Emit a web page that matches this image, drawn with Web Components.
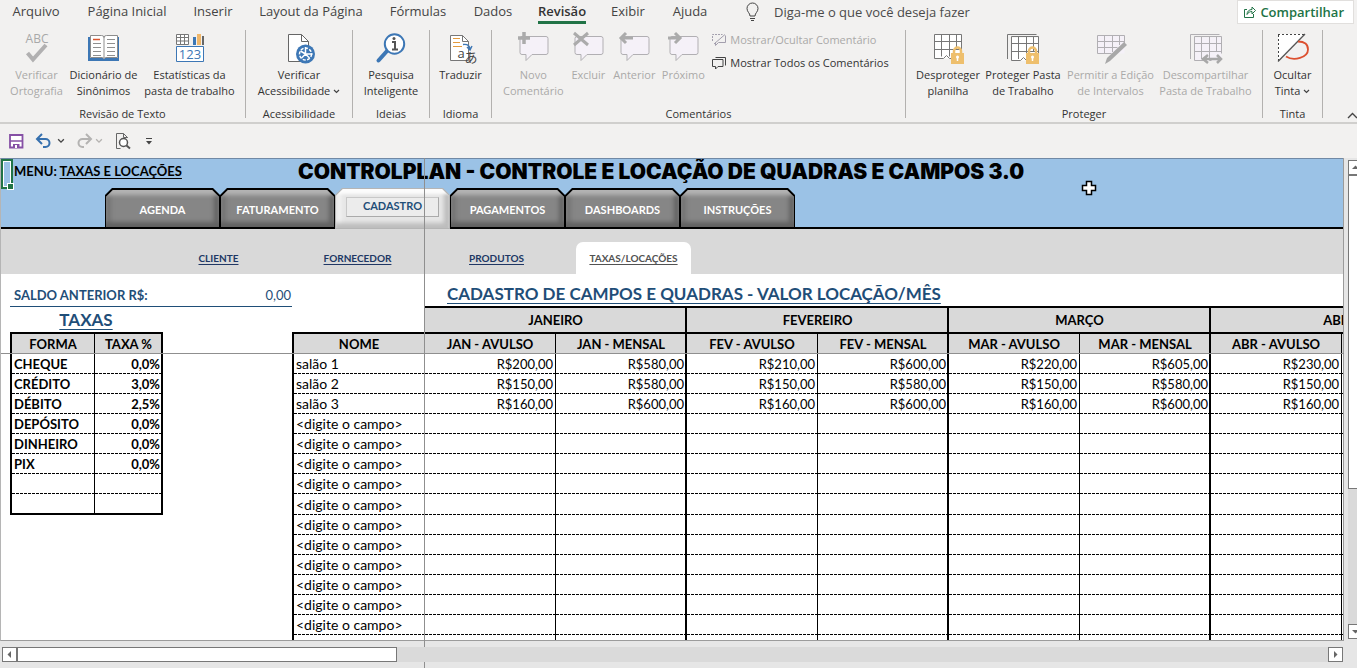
<!DOCTYPE html>
<html lang="pt-BR">
<head>
<meta charset="utf-8">
<title>Controlplan</title>
<style>
    html, body {
        margin: 0;
        height: 100%;
        overflow: hidden;
    }

    body {
        background: #f2f1f0;
        color: #333;
        font-family: "Open Sans", "Noto Sans", sans-serif;
        font-size: 11px;
    }
</style>
</head>
<body>
<office-window></office-window>

<template id="window-template">
    <style>
        :host {
            display: flex;
            flex-direction: column;
            height: 100vh;
        }

        .tabs {
            display: flex;
            align-items: center;
            height: 26px;
            padding-left: 6px;
        }

        .tell-me {
            display: flex;
            align-items: center;
            gap: 11px;
            padding: 0 0 3px 27px;
            border: 0;
            background: none;
            color: #4a4a4a;
            font: inherit;
            font-size: 13px;
            white-space: nowrap;
        }

        .share {
            display: flex;
            align-items: center;
            gap: 4px;
            height: 24px;
            margin: 0 3px 3px auto;
            padding: 0 9px 0 6px;
            border: 1px solid #e1dfdd;
            background: white;
            color: #217346;
            font: inherit;
            font-size: 13px;
            font-weight: 600;
        }

        .ribbon {
            display: flex;
            height: 96px;
            border-bottom: 2px solid #d0cfcd;
        }

        .collapse {
            align-self: flex-end;
            margin-left: auto;
            padding: 0;
            border: 0;
            background: none;
            color: #444;
            line-height: 0;
            overflow: hidden;
        }

        .comments {
            display: flex;
            flex-direction: column;
            gap: 7px;
            padding: 0 8px 0 4px;
        }

        .quick {
            display: flex;
            align-items: center;
            height: 34px;
            padding-left: 7px;
        }

        .quick button {
            padding: 0;
            border: 0;
            background: none;
            line-height: 0;
        }

        .quick .next {
            margin-left: 8px;
        }

        main {
            position: relative;
            display: flex;
            flex: 1;
            min-height: 0;
            background: #e6e6e6;
        }

        .pane {
            display: flex;
            flex: 1;
            flex-direction: column;
            min-width: 0;
        }

        control-sheet {
            flex: 1;
            min-height: 0;
        }
    </style>

    <nav class="tabs">
        <ribbon-tab width="60">Arquivo</ribbon-tab>
        <ribbon-tab width="122">Página Inicial</ribbon-tab>
        <ribbon-tab width="50">Inserir</ribbon-tab>
        <ribbon-tab width="146">Layout da Página</ribbon-tab>
        <ribbon-tab width="68">Fórmulas</ribbon-tab>
        <ribbon-tab width="82">Dados</ribbon-tab>
        <ribbon-tab width="56" active>Revisão</ribbon-tab>
        <ribbon-tab width="76">Exibir</ribbon-tab>
        <ribbon-tab width="48">Ajuda</ribbon-tab>
        <button class="tell-me"><app-icon name="bulb" width="22" height="22"></app-icon>Diga-me o que você deseja fazer</button>
        <button class="share"><app-icon name="share" width="12" height="12"></app-icon>Compartilhar</button>
    </nav>

    <section class="ribbon">
        <ribbon-group label="Revisão de Texto" width="246">
            <ribbon-button icon="spelling" width="64" disabled>Verificar<br>Ortografia</ribbon-button>
            <ribbon-button icon="thesaurus" width="70">Dicionário de<br>Sinônimos</ribbon-button>
            <ribbon-button icon="stats" width="102">Estatísticas da<br>pasta de trabalho</ribbon-button>
        </ribbon-group>
        <ribbon-group label="Acessibilidade" width="107">
            <ribbon-button icon="access" width="96">Verificar<br>Acessibilidade <app-icon name="down" width="7" height="7"></app-icon></ribbon-button>
        </ribbon-group>
        <ribbon-group label="Ideias" width="77">
            <ribbon-button icon="lookup" width="66">Pesquisa<br>Inteligente</ribbon-button>
        </ribbon-group>
        <ribbon-group label="Idioma" width="62">
            <ribbon-button icon="translate" width="50">Traduzir</ribbon-button>
        </ribbon-group>
        <ribbon-group label="Comentários" width="414">
            <ribbon-button icon="note-new" width="66" disabled>Novo<br>Comentário</ribbon-button>
            <ribbon-button icon="note-delete" width="44" disabled>Excluir</ribbon-button>
            <ribbon-button icon="note-prev" width="48" disabled>Anterior</ribbon-button>
            <ribbon-button icon="note-next" width="50" disabled>Próximo</ribbon-button>
            <div class="comments">
                <ribbon-line icon="note-toggle" disabled>Mostrar/Ocultar Comentário</ribbon-line>
                <ribbon-line icon="note-all">Mostrar Todos os Comentários</ribbon-line>
            </div>
        </ribbon-group>
        <ribbon-group label="Proteger" width="357">
            <ribbon-button icon="sheet-lock" width="68">Desproteger<br>planilha</ribbon-button>
            <ribbon-button icon="book-lock" width="82">Proteger Pasta<br>de Trabalho</ribbon-button>
            <ribbon-button icon="sheet-edit" width="93" disabled>Permitir a Edição<br>de Intervalos</ribbon-button>
            <ribbon-button icon="book-share" width="97" disabled>Descompartilhar<br>Pasta de Trabalho</ribbon-button>
        </ribbon-group>
        <ribbon-group label="Tinta" width="60">
            <ribbon-button icon="ink" width="50">Ocultar<br>Tinta <app-icon name="down" width="7" height="7"></app-icon></ribbon-button>
        </ribbon-group>
        <button class="collapse" aria-label="Recolher"><app-icon name="up" width="10" height="16"></app-icon></button>
    </section>

    <div class="quick">
        <button aria-label="Salvar"><app-icon name="save" width="18" height="18"></app-icon></button>
        <button class="next" aria-label="Desfazer"><app-icon name="undo" width="22" height="18"></app-icon></button>
        <button aria-label="Lista desfazer"><app-icon name="down" width="12" height="8"></app-icon></button>
        <button class="next" aria-label="Refazer"><app-icon name="redo" width="18" height="18"></app-icon></button>
        <button aria-label="Lista refazer"><app-icon name="down-off" width="12" height="8"></app-icon></button>
        <button class="next" aria-label="Visualizar"><app-icon name="preview" width="18" height="18"></app-icon></button>
        <button class="next" aria-label="Personalizar"><app-icon name="more" width="20" height="10"></app-icon></button>
    </div>

    <main>
        <div class="pane">
            <control-sheet></control-sheet>
            <scroll-bar></scroll-bar>
        </div>
        <scroll-bar vertical></scroll-bar>
    </main>
</template>

<template id="tab-template">
    <style>
        :host {
            display: flex;
            justify-content: center;
            height: 100%;
        }

        button {
            height: 24px;
            padding: 0;
            border: 0;
            border-bottom: 3px solid transparent;
            background: none;
            color: #444;
            font: inherit;
            font-size: 13px;
            white-space: nowrap;
        }

        :host([active]) button {
            border-color: #217346;
            color: #333;
            font-weight: 600;
        }
    </style>
    <button><slot></slot></button>
</template>

<template id="group-template">
    <style>
        :host {
            display: flex;
            flex: none;
            box-sizing: border-box;
            margin: 4px 0;
            border-right: 1px solid #b3b1af;
            flex-direction: column;
            justify-content: space-between;
        }

        .items {
            display: flex;
            justify-content: center;
            align-items: flex-start;
            padding-top: 2px;
        }

        .label {
            line-height: 9px;
            text-align: center;
        }
    </style>
    <div class="items"><slot></slot></div>
    <div class="label"></div>
</template>

<template id="button-template">
    <style>
        :host {
            display: block;
            flex: none;
        }

        button {
            display: flex;
            flex-direction: column;
            align-items: center;
            width: 100%;
            gap: 3px;
            padding: 0;
            border: 0;
            background: none;
            color: inherit;
            font: inherit;
            line-height: 16px;
            white-space: nowrap;
        }

        button:disabled {
            color: #aaa9a8;
        }
    </style>
    <button><app-icon width="32" height="32"></app-icon><span><slot></slot></span></button>
</template>

<template id="line-template">
    <style>
        :host {
            display: block;
        }

        button {
            display: flex;
            align-items: center;
            gap: 4px;
            padding: 0;
            border: 0;
            background: none;
            color: inherit;
            font: inherit;
            line-height: 16px;
            white-space: nowrap;
        }

        button:disabled {
            color: #aaa9a8;
        }
    </style>
    <button><app-icon width="14" height="14"></app-icon><slot></slot></button>
</template>

<template id="scroll-template">
    <style>
        :host {
            display: flex;
            flex: none;
            box-sizing: border-box;
            height: 27px;
            padding: 6px 0 6px 2px;
            background: #e6e6e6;
        }

        :host([vertical]) {
            flex-direction: column;
            width: 14px;
            height: auto;
            margin-bottom: 27px;
            padding: 2px 0 2px 4px;
            overflow: hidden;
            border-left: 1px solid #9b9b9b;
        }

        button {
            flex: none;
            box-sizing: border-box;
            width: 15px;
            height: 15px;
            padding: 0;
            border: 1px solid #777;
            background: white;
            line-height: 0;
        }

        .track {
            position: relative;
            z-index: 2;
            flex: 1;
            display: flex;
            background: #dadada;
        }

        .thumb {
            box-sizing: border-box;
            width: 29%;
            border: 1px solid #777;
            background: white;
        }

        :host([vertical]) .track {
            flex-direction: column;
            width: 15px;
        }

        :host([vertical]) .thumb {
            width: auto;
            height: 70%;
        }
    </style>
    <button aria-label="Voltar"><app-icon class="back" width="13" height="13"></app-icon></button>
    <div class="track"><div class="thumb"></div></div>
    <button aria-label="Avançar"><app-icon class="forward" width="13" height="13"></app-icon></button>
</template>

<template id="sheet-template">
    <style>
        :host {
            display: flex;
            flex-direction: column;
            box-sizing: border-box;
            overflow: hidden;
            border-top: 1px solid #7189a5;
            border-left: 1px solid #b5b5b5;
            border-bottom: 1px solid #9b9b9b;
            background: white;
            color: black;
            font-family: Lato, sans-serif;
            font-size: 13px;
        }

        .banner {
            display: flex;
            flex: none;
            flex-direction: column;
            justify-content: space-between;
            height: 68px;
            border-bottom: 2px solid black;
            background: #9bc2e6;
        }

        .heading {
            display: grid;
            grid-template-columns: 284px 1fr;
            line-height: 24px;
            padding-left: 13px;
            white-space: nowrap;
        }

        .menu {
            font-weight: 700;
        }

        .menu a {
            color: inherit;
            text-underline-offset: 2px;
        }

        h1 {
            margin: 0;
            font-family: Inter, "Liberation Sans", sans-serif;
            font-size: 21px;
            font-weight: 900;
            line-height: 26px;
        }

        .nav {
            display: flex;
            margin: 0 0 -2px 104px;
        }

        .subnav {
            display: flex;
            flex: none;
            align-items: flex-end;
            height: 45px;
            padding-left: 148px;
            background: #d9d9d9;
        }

        .subnav a {
            box-sizing: border-box;
            width: 139px;
            color: #203764;
            font-size: 10px;
            font-weight: 700;
            line-height: 32px;
            text-align: center;
            text-underline-offset: 2px;
        }

        .subnav a.active {
            width: 115px;
            margin-left: 10px;
            border-radius: 7px 7px 0 0;
            background: white;
            color: #525252;
        }

        .content {
            display: flex;
            flex: 1;
            min-height: 0;
        }

        .side {
            flex: none;
            width: 282px;
            padding-left: 9px;
            color: #1f4e78;
        }

        .balance {
            display: flex;
            justify-content: space-between;
            box-sizing: border-box;
            height: 33px;
            padding: 11px 1px 0 4px;
            border-bottom: 1px solid #1f4e78;
            line-height: 20px;
        }

        h2 {
            margin: 0;
            color: #1f4e78;
            font-size: 17px;
            font-weight: 700;
            line-height: 25px;
            text-decoration: underline;
            text-decoration-thickness: 1px;
            text-underline-offset: 3px;
            white-space: nowrap;
        }

        .side h2 {
            width: 152px;
            text-align: center;
        }

        .prices {
            flex: none;
        }

        .prices h2 {
            padding: 8px 0 0 155px;
            line-height: 24px;
        }

        /* Frozen pane edges */
        .freeze-row, .freeze-column {
            position: absolute;
            z-index: 1;
            top: 0;
            left: 424px;
            width: 1px;
            height: 100%;
            background: #8f8f8f;
        }

        .freeze-row {
            top: 195px;
            left: 1px;
            width: calc(100% - 14px);
            height: 1px;
        }

        .selection {
            position: absolute;
            top: 1px;
            left: 1px;
            box-sizing: border-box;
            width: 12px;
            height: 30px;
            border: 2px solid #217346;
            box-shadow: inset 0 0 0 1px white;
        }

        .selection::after {
            content: "";
            position: absolute;
            right: -3px;
            bottom: -3px;
            width: 5px;
            height: 5px;
            border: 1px solid white;
            background: #217346;
        }

        .cursor {
            position: absolute;
            top: 22px;
            left: 1081px;
        }
    </style>

    <div class="banner">
        <div class="heading">
            <div class="menu">MENU: <a href="#menu">TAXAS E LOCAÇÕES</a></div>
            <h1>CONTROLPLAN - CONTROLE E LOCAÇÃO DE QUADRAS E CAMPOS 3.0</h1>
        </div>
        <nav class="nav">
            <sheet-button>AGENDA</sheet-button>
            <sheet-button>FATURAMENTO</sheet-button>
            <sheet-button active>CADASTRO</sheet-button>
            <sheet-button>PAGAMENTOS</sheet-button>
            <sheet-button>DASHBOARDS</sheet-button>
            <sheet-button>INSTRUÇÕES</sheet-button>
        </nav>
    </div>

    <nav class="subnav">
        <a href="#cliente">CLIENTE</a>
        <a href="#fornecedor">FORNECEDOR</a>
        <a href="#produtos">PRODUTOS</a>
        <a href="#taxas" class="active">TAXAS/LOCAÇÕES</a>
    </nav>

    <div class="content">
        <div class="side">
            <div class="balance"><b>SALDO ANTERIOR R$:</b><span>0,00</span></div>
            <h2>TAXAS</h2>
            <fee-table></fee-table>
        </div>
        <div class="prices">
            <h2>CADASTRO DE CAMPOS E QUADRAS - VALOR LOCAÇÃO/MÊS</h2>
            <price-table></price-table>
        </div>
    </div>

    <div class="freeze-column"></div>
    <div class="freeze-row"></div>
    <div class="selection"></div>
    <app-icon class="cursor" name="cross" width="16" height="16"></app-icon>
</template>

<template id="sheet-button-template">
    <style>
        :host {
            --cut: polygon(7px 0, calc(100% - 7px) 0, 100% 7px, 100% 100%, 0 100%, 0 7px);
            display: block;
            width: 115px;
            height: 41px;
        }

        .edge {
            box-sizing: border-box;
            height: 100%;
            padding: 2px 1px;
            background: black;
            clip-path: var(--cut);
        }

        button {
            display: block;
            box-sizing: border-box;
            width: 100%;
            height: 100%;
            padding: 3px 0 0;
            border: 0;
            background: #868686;
            box-shadow:
                inset 0 -6px 4px -1px #626262,
                inset 0 6px 4px -1px #b5b5b5,
                inset -6px 0 4px -1px #636363,
                inset 6px 0 4px -1px #757575;
            color: white;
            clip-path: var(--cut);
            font: inherit;
            font-size: 11px;
            font-weight: 700;
            line-height: 20px;
        }

        :host([active]) .edge {
            padding: 1px;
            background: #b5b5b5;
        }

        :host([active]) button {
            padding: 0 10px 4px;
            background: #e6e6e6;
            box-shadow:
                inset 0 6px 3px -1px #fcfcfc,
                inset 0 -6px 4px -1px #bdbdbd,
                inset -6px 0 4px -1px #bcbcbc,
                inset 6px 0 4px -1px #f4f4f4;
            color: #1f4e78;
        }

        :host([active]) span {
            display: block;
            border: 1px solid;
            border-color: #c8c8c8 #aaa #aaa #c8c8c8;
            background: #ececec;
            line-height: 16px;
            height: 18px;
        }
    </style>
    <div class="edge"><button><span><slot></slot></span></button></div>
</template>

<template id="table-template">
    <style>
        :host {
            display: block;
        }

        table {
            border-collapse: separate;
            border-spacing: 0;
            table-layout: fixed;
            color: black;
        }

        th, td {
            box-sizing: border-box;
            height: 20px;
            padding: 0 2px;
            border-right: 1px solid black;
            line-height: 18px;
            text-align: right;
            white-space: nowrap;
        }

        td {
            background: repeating-linear-gradient(90deg, black 0 3px, transparent 3px 4px) left bottom / 100% 1px no-repeat;
        }

        td:first-child {
            text-align: left;
        }

        th {
            height: 22px;
            border-top: 2px solid black;
            border-bottom: 1px solid black;
            background: #d9d9d9;
            text-align: center;
        }

        th.group {
            height: 26px;
            border-bottom: 0;
        }

        th.none {
            border-top: 0;
            background: none;
        }

        td:first-child, th:first-child:not(.none) {
            border-left: 2px solid black;
        }

        .thick {
            padding-right: 1px;
            border-right-width: 2px;
        }

        tbody tr:nth-child(8) td {
            height: 21px;
        }

        .fees {
            width: 153px;
        }

        .fees td {
            font-weight: 700;
        }

        .prices td:first-child {
            font-size: 14px;
        }

        .fees tr:last-child td {
            border-bottom: 2px solid black;
            background: none;
        }
    </style>
    <table></table>
</template>

<script>
    const bubble = (x, y, stroke = '#b1afb3') =>
        `<path d="M${x} ${y}h24q2 0 2 2v14q0 2-2 2h-14l-6 6v-6h-4q-2 0-2-2v-14q0-2 2-2z" fill="#f5f1f8" stroke="${stroke}"/>`;
    const grid = (stroke, fill = 'white') =>
        `<path d="M2.500 2.500h27v24h-27z" fill="${fill}"/><path d="M2.500 26.500v-24h27v17M2.500 9.500h27M2.500 17.500h27M9.500 2.500v22M17.500 2.500v22M24.500 2.500v15M2.500 26.500h9l3-3 3 3h3" fill="none" stroke="${stroke}"/>`;
    const book = (stroke, fill = 'white') =>
        `<path d="M.5 27V2.500h29" fill="none" stroke="${stroke}"/><path d="M4.500 5.500h27v23h-27z" fill="${fill}"/><path d="M4.500 28.500v-24h27v17M4.500 11.500h27M4.500 19.500h27M11.500 5v22M19.500 5v22M26.500 5v14M4.500 28.500h9l3-3 3 3h2" fill="none" stroke="${stroke}"/>`;
    const lock = (x) =>
        `<path d="M${x + 3} 22v-3a3.500 3.500 0 0 1 7 0v3" fill="none" stroke="#eebf6d" stroke-width="2.500"/><path d="M${x} 21h13v11h-13z" fill="#eebf6d"/><circle cx="${x + 6.5}" cy="25" r="1.500" fill="white"/><path d="M${x + 6.5} 25v4" stroke="white" stroke-width="1.500"/>`;

    const icons = {
        'bulb': ['9 0 22 22', '<path d="M18 15c0-3-3-4-3-7.500a5.500 5.500 0 0 1 11 0c0 3.500-3 4.500-3 7.500zM18 17.500h5M19 19.500h3" fill="none" stroke="#444"/>'],
        'share': ['0 0 12 12', '<path d="M3 3.500H.5v8h9V8M3 8.500c0-3 2-5 5-5V1l3.500 3.500L8 8V5.500c-2 0-4 1-5 3z" fill="none" stroke="#217346"/>'],
        'down': ['0 0 7 7', '<path d="M1 2l2.500 2.500L6 2" fill="none" stroke="#444" stroke-width="1.200"/>'],
        'down-off': ['0 0 7 7', '<path d="M1 2l2.500 2.500L6 2" fill="none" stroke="#b5b3b1" stroke-width="1.200"/>'],
        'up': ['0 0 10 16', '<path d="M1 12l4.500-4.500L10 12" fill="none" stroke="#444" stroke-width="1.400"/>'],
        'spelling': ['0 0 32 32', '<text x="16" y="11" text-anchor="middle" font-size="12" fill="#a8a8a8">ABC</text><path d="M6.500 21l5.500 6.500L25 13" fill="none" stroke="#b1b0b1" stroke-width="4"/>'],
        'thesaurus': ['0 0 32 32', '<path d="M0 5h2v21h13l1 1 1-1h13V5h1v24H0z" fill="#3d77b5"/><path d="M2.500 3.500h11q2.500 0 2.500 2 0-2 2.500-2h11v22h-12l-1.500 1-1.500-1h-12z" fill="white" stroke="#8c8c8c"/><path d="M16 5v21M5 11.500h8M5 15.500h8M5 19.500h8M5 23.500h8M19 7.500h8M19 11.500h8M19 15.500h8M19 19.500h8M19 23.500h8" stroke="#8f8f8f"/><path d="M5 7.500h7" stroke="#d9552f" stroke-width="1.500"/>'],
        'stats': ['0 0 32 32', '<path d="M2.500 2.500h12v10h-12z" fill="white"/><path d="M2.500 2.500h12v10h-12zM2.500 5.500h12M2.500 9h12M6.500 2v10M10.500 2v10" fill="none" stroke="#777"/><path d="M19 5h3v8h-3z" fill="#3d77b5"/><path d="M23 2h4v11h-4z" fill="#f0b76a"/><path d="M28 4h2v9h-2z" fill="#666"/><path d="M2.500 14.500h27v15h-27z" fill="white" stroke="#3d77b5"/><text x="16" y="27" text-anchor="middle" font-size="13" fill="#3d77b5">123</text>'],
        'access': ['0 0 32 32', '<path d="M5.500 2.500h13l7 7v20h-20z" fill="white" stroke="#666"/><path d="M18.500 2.500v7h7" fill="none" stroke="#666"/><circle cx="22.500" cy="22" r="9.500" fill="#3d77b5"/><circle cx="22.500" cy="22" r="6" fill="none" stroke="white" stroke-width="1.500" stroke-dasharray="3 1.500"/><path d="M22.500 22V15M22.500 22h7M22.500 22l-4 4M22.500 22l4 4M22.500 22l-5-3" stroke="white" stroke-width="1.500"/>'],
        'lookup': ['0 0 32 32', '<path d="M12 19L3.500 28.500" stroke="#3d77b5" stroke-width="4" stroke-linecap="round"/><circle cx="19.500" cy="12" r="9.700" fill="white" stroke="#3d77b5" stroke-width="2"/><path d="M17 10h3v7M17 17.500h6" fill="none" stroke="#555" stroke-width="2"/><circle cx="19" cy="6.500" r="1.500" fill="#555"/>'],
        'translate': ['0 0 32 32', '<path d="M5.500 3.500h12l6 6v19h-18z" fill="white" stroke="#777"/><path d="M17.500 3.500v6h6" fill="none" stroke="#777"/><path d="M8 6.500h7M8 10.500h7M8 14.500h9" stroke="#e49a3c"/><path d="M18 12.500q6-1 7 4M22 15l3 3 2-4" fill="none" stroke="#3d77b5" stroke-width="1.400"/><text x="12.500" y="26" font-size="13" fill="#444">a</text><text x="19.500" y="29.500" font-size="13" fill="#444">あ</text>'],
        'note-new': ['0 0 32 32', bubble(5, 4.5) + '<path d="M7 0v12M1 6h12" stroke="#ababab" stroke-width="3.500"/>'],
        'note-delete': ['0 0 32 32', bubble(5, 4.5) + '<path d="M2 1l14 12M16 1L2 13" stroke="#ababab" stroke-width="3"/>'],
        'note-prev': ['0 0 32 32', bubble(5, 4.5) + '<path d="M3 6h12M8 1L3 6l5 5" fill="none" stroke="#ababab" stroke-width="3"/>'],
        'note-next': ['0 0 32 32', bubble(5, 4.5) + '<path d="M1 6h12M8 1l5 5-5 5" fill="none" stroke="#ababab" stroke-width="3"/>'],
        'note-toggle': ['0 0 14 14', '<path d="M.5 8V1.500h10" fill="none" stroke="#a39fad" stroke-dasharray="2 1"/><path d="M13.500 2.500v7h-7l-3 3v-3M2 11L13 1.500" fill="none" stroke="#a39fad"/>'],
        'note-all': ['0 0 14 14', '<path d="M3.500 1.500h10v8M.5 3.500h10.500v7H6l-2.500 2.500v-2.500h-3z" fill="none" stroke="#444"/>'],
        'sheet-lock': ['0 0 32 32', grid('#777') + lock(19)],
        'book-lock': ['0 0 32 32', book('#777') + lock(19)],
        'sheet-edit': ['0 0 32 32', '<path d="M2.500 3.500h27v18h-27z" fill="#f5f1f8"/><path d="M2.500 21.500v-18h27v8M2.500 9.500h27M2.500 15.500h20M9.500 4v17M17.500 4v16M24.500 4v9M2.500 21.500h14" fill="none" stroke="#b1afb3"/><path d="M29 10l3 3-17 16-5 3 2-6z" fill="#a8a8a8"/>'],
        'book-share': ['0 0 32 32', book('#b1afb3', '#f5f1f8') + '<path d="M15 27h15M18 23l-5 4 5 4M27 23l4 4-4 4" fill="none" stroke="#a8a8a8" stroke-width="2.500"/>'],
        'ink': ['0 0 32 32', '<path d="M1 2h27L1 29z" fill="white"/><path d="M1 2.500h27M1.500 3v26" stroke="#444" stroke-dasharray="2 2"/><path d="M1 29.500L28 2" stroke="#555" stroke-width="1.300"/><path d="M21 9.500q10 0 10 8c0 8-14 12-22 7" fill="none" stroke="#dc5030" stroke-width="1.800"/>'],
        'save': ['0 0 18 18', '<path d="M3 3h12.500v12.500H3z" fill="white" stroke="#8650a5" stroke-width="1.800"/><path d="M3 9h13" stroke="#8650a5" stroke-width="1.500"/><path d="M6 12h6.500v4H6z" fill="#8650a5"/><path d="M8 13h2v3H8z" fill="white"/>'],
        'undo': ['0 0 18 18', '<path d="M2 7h8.500a4 4 0 0 1 0 8H8M7 2L2 7l5 5" fill="none" stroke="#3670ae" stroke-width="2"/>'],
        'redo': ['0 0 18 18', '<path d="M16 7H7.500a4 4 0 0 0 0 8H9M11 2l5 5-5 5" fill="none" stroke="#b4b3b2" stroke-width="2"/>'],
        'preview': ['0 0 18 18', '<path d="M14.500 6V5.500l-4-4h-7v15h4M10.500 1.500v4h4" fill="none" stroke="#666"/><circle cx="10.500" cy="10.500" r="4" fill="white" stroke="#555" stroke-width="1.500"/><path d="M13.500 13.500l3.500 3" stroke="#555" stroke-width="2"/>'],
        'more': ['0 0 20 10', '<path d="M7 2.500h6" stroke="#444"/><path d="M7 5h6l-3 3.500z" fill="#444"/>'],
        'left': ['0 0 13 13', '<path d="M8 3v7L4.500 6.500z" fill="#666"/>'],
        'right': ['0 0 13 13', '<path d="M5 3v7l3.500-3.500z" fill="#666"/>'],
        'top': ['0 0 13 13', '<path d="M3 8h7L6.500 4.500z" fill="#666"/>'],
        'bottom': ['0 0 13 13', '<path d="M3 5h7L6.500 8.500z" fill="#666"/>'],
        'cross': ['0 0 16 16', '<path d="M5.500 1.500h5v4h4v5h-4v4h-5v-4h-4v-5h4z" fill="white" stroke="black" stroke-width="1.500"/>'],
    };

    class TemplateElement extends HTMLElement {
        connectedCallback() {
            if (this.shadowRoot) return;
            const root = this.attachShadow({ mode: 'open' });
            const content = document.getElementById(this.constructor.template).content.cloneNode(true);
            const width = this.getAttribute('width');
            if (width) this.style.width = width + 'px';
            this.render(content);
            root.appendChild(content);
        }

        render() {}
    }

    class AppIcon extends HTMLElement {
        connectedCallback() {
            if (this.shadowRoot) return;
            const root = this.attachShadow({ mode: 'open' });
            const [viewBox, shapes] = icons[this.getAttribute('name')];
            root.innerHTML = `
                <style>
                    :host { display: inline-block; flex: none; line-height: 0; }
                    svg { overflow: visible; }
                </style>
                <svg width="${this.getAttribute('width')}" height="${this.getAttribute('height')}" viewBox="${viewBox}"
                    font-family="Open Sans, Noto Sans CJK JP, sans-serif">${shapes}</svg>`;
        }
    }

    class OfficeWindow extends TemplateElement {
        static template = 'window-template';
    }

    class RibbonTab extends TemplateElement {
        static template = 'tab-template';
    }

    class RibbonGroup extends TemplateElement {
        static template = 'group-template';

        render(content) {
            content.querySelector('.label').textContent = this.getAttribute('label');
        }
    }

    class RibbonButton extends TemplateElement {
        static template = 'button-template';

        render(content) {
            content.querySelector('app-icon').setAttribute('name', this.getAttribute('icon'));
            content.querySelector('button').disabled = this.hasAttribute('disabled');
        }
    }

    class RibbonLine extends RibbonButton {
        static template = 'line-template';
    }

    class ScrollBar extends TemplateElement {
        static template = 'scroll-template';

        render(content) {
            const vertical = this.hasAttribute('vertical');
            content.querySelector('.back').setAttribute('name', vertical ? 'top' : 'left');
            content.querySelector('.forward').setAttribute('name', vertical ? 'bottom' : 'right');
        }
    }

    class ControlSheet extends TemplateElement {
        static template = 'sheet-template';
    }

    class SheetButton extends TemplateElement {
        static template = 'sheet-button-template';
    }

    class FeeTable extends TemplateElement {
        static template = 'table-template';

        render(content) {
            const fees = [
                ['CHEQUE', '0,0%'], ['CRÉDITO', '3,0%'], ['DÉBITO', '2,5%'], ['DEPÓSITO', '0,0%'],
                ['DINHEIRO', '0,0%'], ['PIX', '0,0%'], ['', ''], ['', ''],
            ];
            const table = content.querySelector('table');
            table.className = 'fees';
            table.innerHTML = `
                <colgroup><col style="width: 85px"><col></colgroup>
                <thead><tr><th>FORMA</th><th class="thick">TAXA %</th></tr></thead>
                <tbody>${fees.map(([name, rate]) => `<tr><td>${name}</td><td class="thick">${rate}</td></tr>`).join('')}</tbody>`;
        }
    }

    class PriceTable extends TemplateElement {
        static template = 'table-template';

        render(content) {
            const months = ['JANEIRO', 'FEVEREIRO', 'MARÇO', 'ABRIL'];
            const columns = ['JAN - AVULSO', 'JAN - MENSAL', 'FEV - AVULSO', 'FEV - MENSAL', 'MAR - AVULSO', 'MAR - MENSAL', 'ABR - AVULSO', ''];
            const rows = [
                ['salão 1', 200, 580, 210, 600, 220, 605, 230],
                ['salão 2', 150, 580, 150, 580, 150, 580, 150],
                ['salão 3', 160, 600, 160, 600, 160, 600, 160],
            ];
            while (rows.length < 15) rows.push([rows.length < 14 ? '&lt;digite o campo&gt;' : '']);

            const edge = i => i % 2 ? ' class="thick"' : '';
            const table = content.querySelector('table');
            table.className = 'prices';
            table.style.width = '1181px';
            table.innerHTML = `
                <colgroup><col style="width: 133px">${columns.map(() => '<col style="width: 131px">').join('')}</colgroup>
                <thead>
                    <tr><th class="group none"></th>${months.map(m => `<th class="group thick" colspan="2">${m}</th>`).join('')}</tr>
                    <tr><th>NOME</th>${columns.map((c, i) => `<th${edge(i)}>${c}</th>`).join('')}</tr>
                </thead>
                <tbody>${rows.map(([name, ...prices]) => `
                    <tr><td>${name}</td>${columns.map((c, i) => `<td${edge(i)}>${prices[i] ? `R$${prices[i]},00` : ''}</td>`).join('')}</tr>`).join('')}
                </tbody>`;
        }
    }

    customElements.define('app-icon', AppIcon);
    customElements.define('ribbon-tab', RibbonTab);
    customElements.define('ribbon-group', RibbonGroup);
    customElements.define('ribbon-button', RibbonButton);
    customElements.define('ribbon-line', RibbonLine);
    customElements.define('scroll-bar', ScrollBar);
    customElements.define('sheet-button', SheetButton);
    customElements.define('fee-table', FeeTable);
    customElements.define('price-table', PriceTable);
    customElements.define('control-sheet', ControlSheet);
    customElements.define('office-window', OfficeWindow);
</script>
</body>
</html>
